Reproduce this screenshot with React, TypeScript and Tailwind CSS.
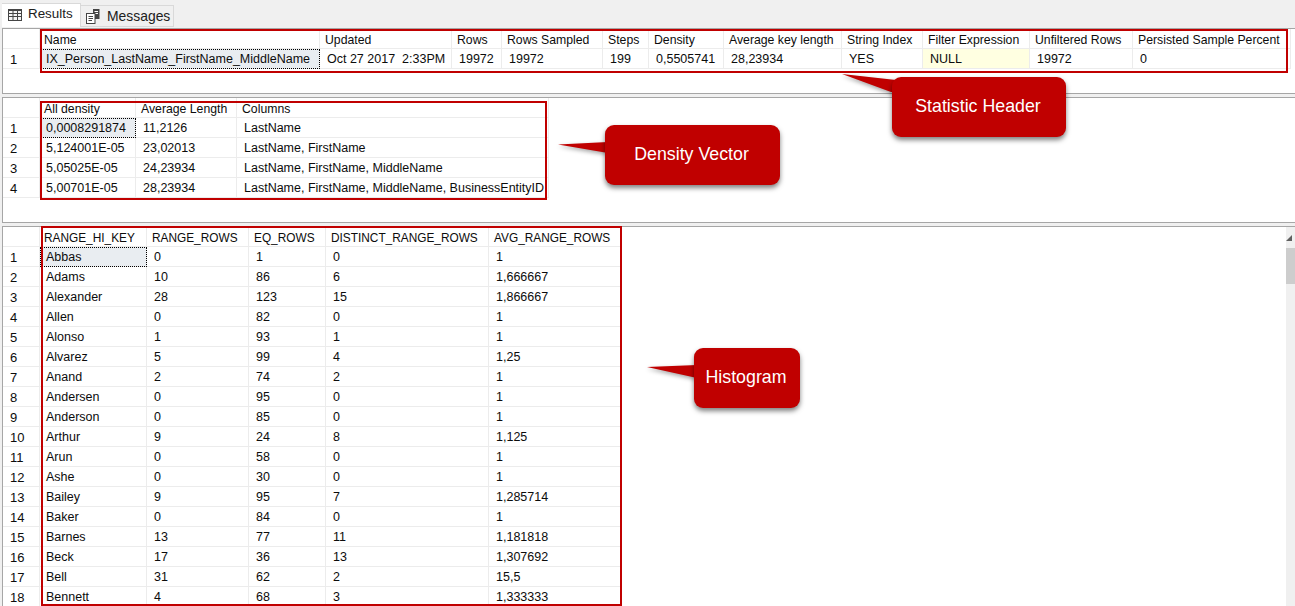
const font = "font-['Liberation_Sans',Arial,sans-serif]";

type GridProps = {
  cols: string;
  headers: string[];
  rows: string[][];
  headerSize?: string;
  note?: number;
};

function Grid({ cols, headers, rows, headerSize = "text-[12.25px]", note = -1 }: GridProps) {
  return (
    <div className={`grid ${cols} auto-rows-[20px] w-max text-[12.5px] leading-[21px] text-[#0c0c0c]`}>
      <div className="border-r border-b border-[#ececec]" />
      {headers.map((h, j) => (
        <div
          key={h}
          className={`border-r border-b border-[#ececec] ${j === 0 ? "pl-[4px]" : "pl-[5px]"} ${headerSize} leading-[23px] whitespace-nowrap overflow-hidden`}
        >
          {h}
        </div>
      ))}
      {rows.map((row, i) => (
        <div key={i} className="contents">
          <div className="border-r border-b border-[#ececec] pl-[7px] text-[13px]">{i + 1}</div>
          {row.map((c, j) => (
            <div
              key={j}
              className={`border-r border-b border-[#ececec] ${j === 0 ? "pl-[6px]" : "pl-[7px]"} whitespace-pre overflow-hidden ${
                i === 0 && j === 0 ? "bg-[#e9edf1] outline-1 outline-dotted outline-black -outline-offset-1" : ""
              } ${j === note ? "bg-[#ffffe1]" : ""}`}
            >
              {c}
            </div>
          ))}
        </div>
      ))}
    </div>
  );
}

function Callout({ className, tail, label, tailClass, box }: { className: string; tail: string; label: string; tailClass: string; box: string }) {
  return (
    <>
      <svg className={`absolute ${tailClass} drop-shadow-[0_2px_2px_rgba(0,0,0,0.35)]`} viewBox={box}>
        <polygon points={tail} fill="#c00000" />
      </svg>
      <div
        className={`absolute ${className} flex items-center justify-center rounded-[9px] bg-[#c00000] pr-[2px] pb-[2px] text-[17.8px] text-white shadow-[0_3px_5px_rgba(0,0,0,0.5)]`}
      >
        {label}
      </div>
    </>
  );
}

const GridIcon = () => (
  <svg width="14" height="12" viewBox="0 0 14 12" className="shrink-0">
    <rect x="0.5" y="0.5" width="13" height="11" fill="#f4f4f4" stroke="#444" />
    <path d="M0.500 1.500h13M5 1v11M9.500 1v11M1 4.500h12M1 7.500h12" stroke="#444" strokeWidth="1" fill="none" />
  </svg>
);

const MsgIcon = () => (
  <svg width="14" height="15" viewBox="0 0 14 15" className="shrink-0">
    <rect x="7" y="0" width="6.500" height="10" fill="#444" />
    <path d="M8.500 2.500h3.500M8.500 4.500h3.500" stroke="#fff" />
    <rect x="0.500" y="4.500" width="8.500" height="10" fill="#fff" stroke="#444" />
    <path d="M2.500 7.500h4.500M2.500 9.500h4.500M2.500 11.500h3.500" stroke="#444" />
  </svg>
);

const hist: string[][] = [
  ["Abbas", "0", "1", "0", "1"],
  ["Adams", "10", "86", "6", "1,666667"],
  ["Alexander", "28", "123", "15", "1,866667"],
  ["Allen", "0", "82", "0", "1"],
  ["Alonso", "1", "93", "1", "1"],
  ["Alvarez", "5", "99", "4", "1,25"],
  ["Anand", "2", "74", "2", "1"],
  ["Andersen", "0", "95", "0", "1"],
  ["Anderson", "0", "85", "0", "1"],
  ["Arthur", "9", "24", "8", "1,125"],
  ["Arun", "0", "58", "0", "1"],
  ["Ashe", "0", "30", "0", "1"],
  ["Bailey", "9", "95", "7", "1,285714"],
  ["Baker", "0", "84", "0", "1"],
  ["Barnes", "13", "77", "11", "1,181818"],
  ["Beck", "17", "36", "13", "1,307692"],
  ["Bell", "31", "62", "2", "15,5"],
  ["Bennett", "4", "68", "3", "1,333333"],
];

export default function App() {
  return (
    <div className={`relative h-[606px] w-[1295px] overflow-hidden bg-[#f0f0f0] pl-[2px] ${font}`}>
      <div className="-ml-[2px] flex h-[28px] items-end pb-[1px] pl-[2px] text-[#202020]">
        <div className="flex h-[24px] w-[79px] items-center gap-[6px] border-t border-r border-[#d9d9d9] bg-white pb-[2px] pl-[6px] text-[13.4px]">
          <GridIcon />
          <span>Results</span>
        </div>
        <div className="flex h-[22px] w-[93px] items-center gap-[7px] border-t border-r border-b border-[#d9d9d9] pl-[5px] text-[13.9px]">
          <MsgIcon />
          <span>Messages</span>
        </div>
      </div>

      <div className="h-[66px] overflow-hidden border-t border-b border-l border-[#a6a6a6] bg-white">
        <Grid
          cols="grid-cols-[37px_280px_132px_50px_101px_46px_75px_118px_81px_107px_103px_158px]"
          headers={["Name", "Updated", "Rows", "Rows Sampled", "Steps", "Density", "Average key length", "String Index", "Filter Expression", "Unfiltered Rows", "Persisted Sample Percent"]}
          rows={[["IX_Person_LastName_FirstName_MiddleName", "Oct 27 2017  2:33PM", "19972", "19972", "199", "0,5505741", "28,23934", "YES", "NULL", "19972", "0"]]}
          note={8}
        />
      </div>

      <div className="mt-[3px] h-[126px] overflow-hidden border-t border-b border-l border-[#a6a6a6] bg-white">
        <Grid
          cols="grid-cols-[37px_96px_101px_312px]"
          headers={["All density", "Average Length", "Columns"]}
          rows={[
            ["0,0008291874", "11,2126", "LastName"],
            ["5,124001E-05", "23,02013", "LastName, FirstName"],
            ["5,05025E-05", "24,23934", "LastName, FirstName, MiddleName"],
            ["5,00701E-05", "28,23934", "LastName, FirstName, MiddleName, BusinessEntityID"],
          ]}
        />
      </div>

      <div className="mt-[3px] flex h-[380px] justify-between overflow-hidden border-t border-l border-[#a6a6a6] bg-white">
        <Grid
          cols="grid-cols-[37px_107px_102px_77px_163px_132px]"
          headers={["RANGE_HI_KEY", "RANGE_ROWS", "EQ_ROWS", "DISTINCT_RANGE_ROWS", "AVG_RANGE_ROWS"]}
          headerSize="text-[11.85px]"
          rows={hist}
        />
        <div className="flex w-[9px] flex-col bg-[#f0f0f0]">
          <div className="flex h-[21px] items-center justify-center">
            <svg width="9" height="8" viewBox="0 0 9 8">
              <path d="M0 7L6 1V7Z" fill="#606060" />
            </svg>
          </div>
          <div className="h-[36px] bg-[#cdcdcd]" />
        </div>
      </div>

      <div className="absolute left-[40px] top-[29px] h-[44px] w-[1248px] border-[2.5px] border-[#c00000]" />
      <div className="absolute left-[40px] top-[101px] h-[99px] w-[507px] border-[2.5px] border-[#c00000]" />
      <div className="absolute left-[41px] top-[226px] h-[380px] w-[581px] border-[2.5px] border-[#c00000]" />

      <Callout
        className="left-[892px] top-[77px] h-[60px] w-[174px]"
        label="Statistic Header"
        tail="1,0 55,6 55,18 50,18"
        box="0 0 55 25"
        tailClass="left-[841px] top-[74px] h-[25px] w-[55px]"
      />
      <Callout
        className="left-[605px] top-[125px] h-[60px] w-[175px]"
        label="Density Vector"
        tail="0,2.500 50,0 50,11"
        box="0 0 50 12"
        tailClass="left-[558px] top-[142px] h-[12px] w-[50px]"
      />
      <Callout
        className="left-[694px] top-[348px] h-[60px] w-[106px]"
        label="Histogram"
        tail="0,2 50,0 50,13"
        box="0 0 50 14"
        tailClass="left-[647px] top-[365px] h-[14px] w-[50px]"
      />
    </div>
  );
}
